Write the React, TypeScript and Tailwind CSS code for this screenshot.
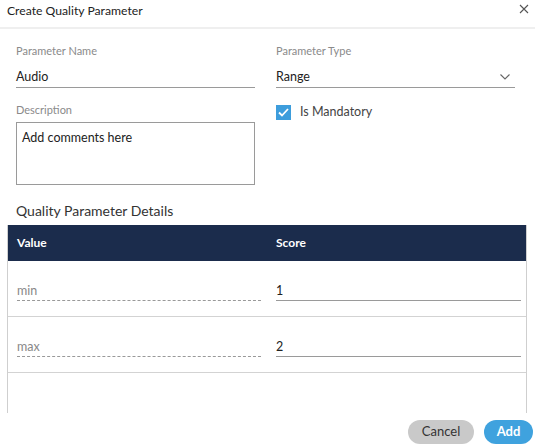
import { useState } from "react";

type Row = { label: string; score: string };

const rows: Row[] = [
  { label: "min", score: "1" },
  { label: "max", score: "2" },
];

export default function App() {
  const [mandatory, setMandatory] = useState(true);

  return (
    <div className="w-[535px] h-[448px] bg-white flex flex-col overflow-hidden font-['Lato',sans-serif] text-[#333]">
      {/* header */}
      <div className="h-[29px] flex items-start justify-between pl-[7px] pr-[6px] pt-[3px] border-b-2 border-[#efefef]">
        <span className="text-[12.2px] leading-[16px] text-[#222]">Create Quality Parameter</span>
        <svg width="10" height="10" viewBox="0 0 10 10" className="mt-[1px]">
          <path d="M1 1 L9 9 M9 1 L1 9" stroke="#555" strokeWidth="1.1" fill="none" />
        </svg>
      </div>

      {/* form */}
      <div className="grid grid-cols-[239px_239px] gap-x-[21px] pl-[16px] pt-[15px]">
        <div className="flex flex-col">
          <label className="text-[11px] leading-[14px] text-[#8a8a8a]">Parameter Name</label>
          <div className="mt-[8px] pt-[2px] pb-[1px] border-b border-[#9a9a9a] text-[12.5px] leading-[18px] text-[#222]">
            Audio
          </div>
          <label className="mt-[15px] text-[11px] leading-[14px] text-[#8a8a8a]">Description</label>
          <div className="mt-[5px] h-[63px] border border-[#9a9a9a] px-[5px] pt-[6px] text-[12.5px] leading-[18px] text-[#222]">
            Add comments here
          </div>
        </div>
        <div className="flex flex-col">
          <label className="text-[11px] leading-[14px] text-[#8a8a8a]">Parameter Type</label>
          <div className="mt-[8px] pt-[2px] pb-[1px] border-b border-[#9a9a9a] flex items-center justify-between text-[12.5px] leading-[18px] text-[#222]">
            <span>Range</span>
            <svg width="10" height="6" viewBox="0 0 10 6" className="mr-[5px]">
              <path d="M0.5 0.5 L5 5 L9.5 0.5" stroke="#666" strokeWidth="1.1" fill="none" />
            </svg>
          </div>
          <button
            onClick={() => setMandatory(!mandatory)}
            className="mt-[15px] flex items-center gap-[9px] text-[12.5px] leading-[18px] text-[#444]"
          >
            <span className="w-[15px] h-[15px] flex items-center justify-center bg-[#3d9ddc]">
              {mandatory && (
                <svg width="11" height="9" viewBox="0 0 11 9">
                  <path d="M1 4.5 L4 7.5 L10 1" stroke="#fff" strokeWidth="1.8" fill="none" />
                </svg>
              )}
            </span>
            Is Mandatory
          </button>
        </div>
      </div>

      {/* details */}
      <div className="pl-[16px] mt-[16px] text-[14px] leading-[20px] text-[#333]">
        Quality Parameter Details
      </div>
      <div className="ml-[7px] w-[520px] h-[188px] mt-[4px] border-x border-[#cfcfcf] overflow-hidden">
        <div className="h-[36px] bg-[#1b2c4c] grid grid-cols-[244px_245px] gap-x-[15px] pl-[9px] items-center text-[12px] font-bold text-white">
          <span>Value</span>
          <span>Score</span>
        </div>
        {rows.map((r) => (
          <div
            key={r.label}
            className="h-[56px] border-b border-[#d3d3d3] grid grid-cols-[244px_245px] gap-x-[15px] pl-[9px] pt-[20px]"
          >
            <div className="h-[20px] pt-[1px] border-b border-dashed border-[#999] text-[12.5px] leading-[18px] text-[#888]">
              {r.label}
            </div>
            <div className="h-[20px] pt-[1px] border-b border-[#9a9a9a] text-[12.5px] leading-[18px] text-[#222]">
              {r.score}
            </div>
          </div>
        ))}
      </div>

      {/* footer */}
      <div className="mt-[7px] flex justify-end gap-[10px] pr-[2px]">
        <button className="h-[24px] w-[66px] rounded-full bg-[#c9c9c9] text-[13px] text-[#333]">Cancel</button>
        <button className="h-[24px] w-[49px] rounded-full bg-[#3fa2de] text-[13px] font-bold text-white">Add</button>
      </div>
    </div>
  );
}
